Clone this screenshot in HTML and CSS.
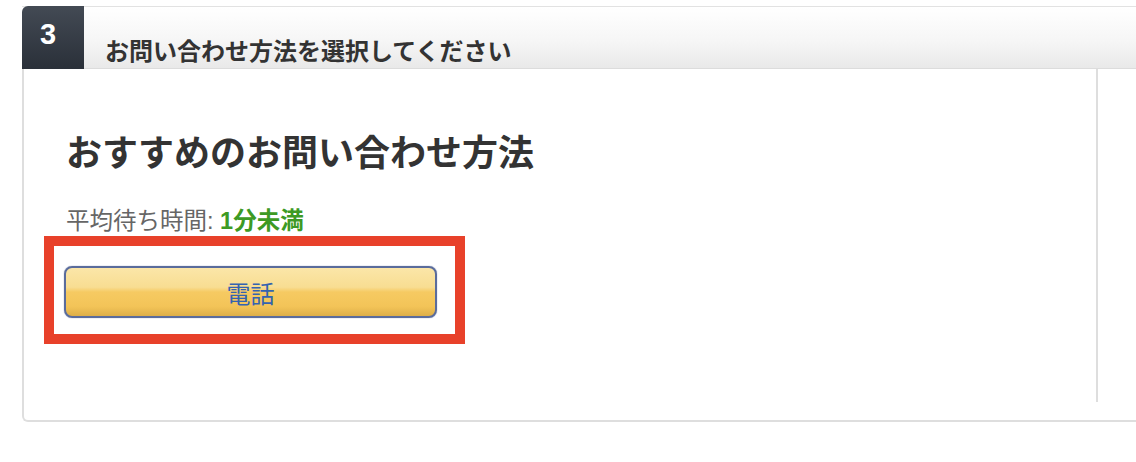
FILE: index.html
```html
<!DOCTYPE html>
<html lang="ja">
<head>
    <meta charset="UTF-8">
    <title>お問い合わせ方法を選択してください</title>
    <link rel="stylesheet" href="styles.css">
</head>
<body>
    <section class="step">
        <header class="step-head">
            <div class="step-num">3</div>
            <h2 class="step-title">お問い合わせ方法を選択してください</h2>
        </header>
        <div class="step-body">
            <div class="step-main">
                <h1 class="method-title">おすすめのお問い合わせ方法</h1>
                <p class="wait">平均待ち時間: <strong>1分未満</strong></p>
                <div class="highlight">
                    <button class="btn-call" type="button">電話</button>
                </div>
            </div>
            <div class="step-side"></div>
        </div>
    </section>
</body>
</html>
```

FILE: styles.css
```css
html, body {
    margin: 0;
    background: #fff;
    overflow: hidden;
}
body {
    font-family: "Liberation Sans", "Noto Sans CJK JP", sans-serif;
    color: #333;
    padding: 6px 0 0 22px;
}
.step {
    width: 1200px;
}
.step-head {
    display: flex;
    height: 61px;
    border-top: 1px solid #e2e2e2;
    background: linear-gradient(#fff 0%, #f6f6f6 55%, #e9e9e9 100%);
    border-bottom: 1px solid #dcdcdc;
}
.step-num {
    width: 62px;
    margin-top: -1px;
    margin-bottom: -1px;
    background: linear-gradient(#434a54, #2a3039);
    border-radius: 6px 0 0 0;
    color: #fff;
    font-weight: bold;
    font-size: 29px;
    line-height: 1;
    padding: 14px 0 0 18px;
    box-sizing: border-box;
}
.step-title {
    margin: 0;
    padding: 31px 0 0 21px;
    font-size: 24px;
    line-height: 28px;
    font-weight: bold;
    color: #333;
}
.step-body {
    display: flex;
    border-left: 2px solid #dedede;
    border-bottom: 2px solid #dedede;
    border-radius: 0 0 0 6px;
    height: 351px;
}
.step-main {
    width: 1074px;
    height: 333px;
    border-right: 2px solid #dedede;
    padding: 63px 0 0 42px;
    box-sizing: border-box;
}
.method-title {
    margin: 0;
    font-size: 36px;
    line-height: 44px;
    font-weight: bold;
    color: #333;
}
.wait {
    margin: 32px 0 0;
    font-size: 23.5px;
    line-height: 26px;
    color: #666;
}
.wait strong {
    color: #3d9a24;
}
.highlight {
    display: inline-block;
    margin: 2px 0 0 -22px;
    border: 10px solid #e8412a;
    padding: 20px 18px 16px 10px;
}
.btn-call {
    display: block;
    width: 373px;
    height: 52px;
    border: 2px solid #5a6c9c;
    border-radius: 8px;
    background: linear-gradient(#fbe6a8 0%, #f8dd92 40%, #f6ca62 50%, #f3c458 80%, #ddae48 100%);
    box-shadow: 0 0 1px #5a6c9c;
    color: #3463b0;
    font-family: "Liberation Sans", "Noto Sans CJK JP", sans-serif;
    font-size: 24px;
    cursor: pointer;
}
```
